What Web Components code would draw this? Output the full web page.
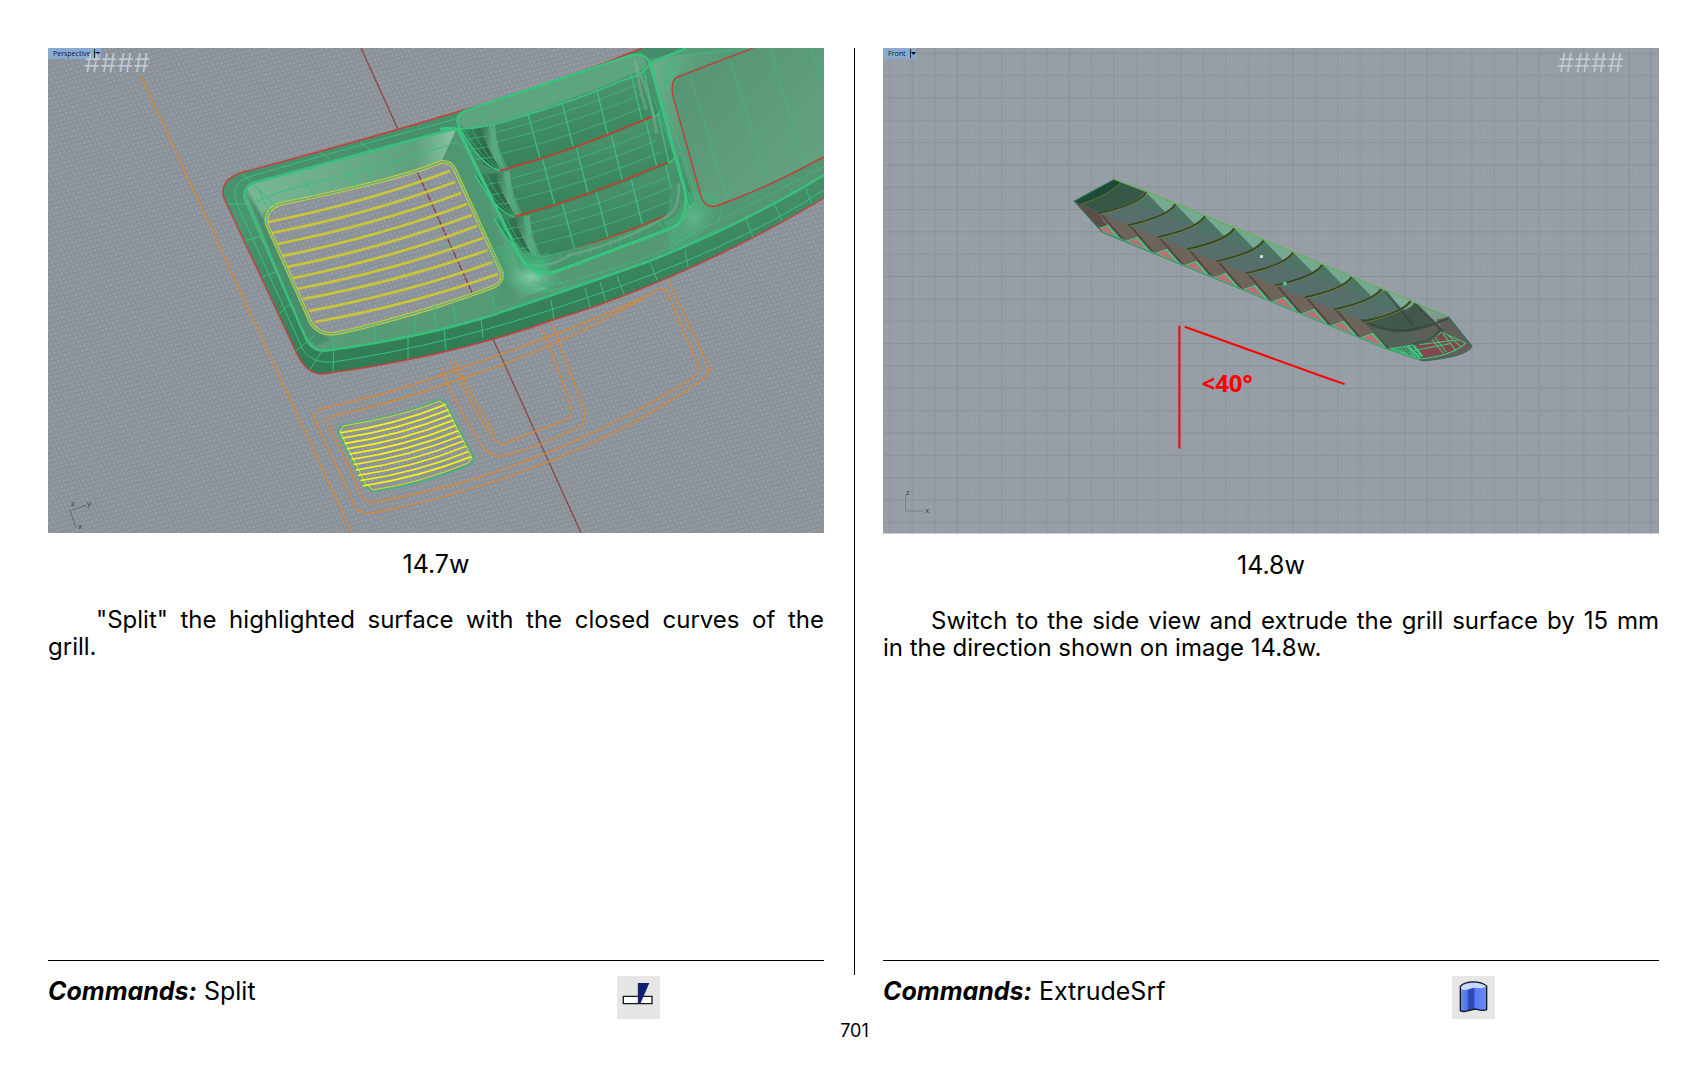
<!DOCTYPE html>
<html lang="en">
<head>
<meta charset="utf-8">
<title>Page 701</title>
<style>
html,body{margin:0;background:#fff;color:#000}
body{font-family:Inter,"Open Sans",sans-serif}
</style>
</head>
<body>
<manual-page number="701">
  <manual-step caption="14.7w" command="Split">
    <perspective-view slot="figure"></perspective-view>
    "Split" the highlighted surface with the closed curves of the grill.
    <split-icon slot="icon"></split-icon>
  </manual-step>
  <manual-step caption="14.8w" command="ExtrudeSrf">
    <front-view slot="figure"></front-view>
    Switch to the side view and extrude the grill surface by 15 mm in the direction shown on image 14.8w.
    <extrude-icon slot="icon"></extrude-icon>
  </manual-step>
</manual-page>

<script>
const define = (name, html) => customElements.define(name, class extends HTMLElement {
  constructor() {
    super();
    this.attachShadow({ mode: 'open' });
  }
  connectedCallback() {
    this.shadowRoot.innerHTML = typeof html === 'function' ? html(this) : html;
  }
});

define('manual-page', el => `
<style>
:host{display:flex;flex-direction:column;box-sizing:border-box;min-height:100vh;padding:48px 48px 25px}
main{flex:1;display:flex}
::slotted(manual-step){flex:1 1 0;min-width:0}
.gap{order:1;flex:none;width:1px;margin:0 28px 44px 30px;background:#000}
::slotted(manual-step:last-child){order:2}
footer{text-align:center;font-size:18px;line-height:22px;padding:1px 0 0 2px}
</style>
<main><slot></slot><div class="gap"></div></main>
<footer>${el.getAttribute('number')}</footer>`);

define('manual-step', el => `
<style>
:host{display:flex;flex-direction:column}
h2{margin:18px 0 0;font-size:25px;line-height:27px;font-weight:400;text-align:center}
p{margin:28px 0 0;font-size:24px;line-height:27px;text-align:justify;text-indent:48px}
footer{margin-top:auto;border-top:1px solid #000;padding-top:15px;display:grid;grid-template-columns:73.3% auto;align-items:start;font-size:25px;line-height:30px}
b{font-weight:700;font-style:italic}
</style>
<slot name="figure"></slot>
<h2>${el.getAttribute('caption')}</h2>
<p><slot></slot></p>
<footer><span><b>Commands:</b> ${el.getAttribute('command')}</span><slot name="icon"></slot></footer>`);

const iconStyle = `<style>:host{display:block;width:43px;height:43px}svg{display:block;width:100%;height:100%}</style>`;
define('split-icon', iconStyle + `
<svg viewBox="52 48 129 129"><path fill="#e6e6e6" d="M52 48h129v129H52z"/>
<path d="M71 109h86v22H71z" fill="#fff" stroke="#151818" stroke-width="4"/>
<path d="M116 69h33l-27 62h-6z" fill="#0c2175"/><path d="M116 69v62" stroke="#111c48" stroke-width="3"/></svg>`);
define('extrude-icon', iconStyle + `
<svg viewBox="66 48 129 129"><defs><linearGradient id="b"><stop offset="0" stop-color="#7190f3"/><stop offset=".25" stop-color="#5070e5"/><stop offset=".34" stop-color="#2847b4"/><stop offset=".5" stop-color="#2c4cc0"/><stop offset=".56" stop-color="#5a7bf6"/><stop offset="1" stop-color="#6888ff"/></linearGradient></defs>
<path fill="#e6e6e6" d="M66 48h129v129H66z"/>
<path d="M91 79C108 61 151 62 170 78V149C161 154 151 151 137 147C119 149 105 160 91 152Z" fill="url(#b)" stroke="#171923" stroke-width="4" stroke-linejoin="round"/>
<path d="M93 80C108 64 151 65 168 79C158 88 147 84 137 83C120 83 105 96 93 86Z" fill="#c7d8ff"/></svg>`);

const viewStyle = `<style>:host{display:block}svg{display:block;width:100%;height:auto}
.label{font:7px "Open Sans",sans-serif;fill:#0b1a2c}.axis{font:8px "Open Sans",sans-serif;fill:#3f4449}
.hash{font:300 26px Inter,sans-serif;fill:#c3ced4}</style>`;

/* Parallel bars between two sides of a grill, bowed slightly downwards. */
function slats(left, right, sag) {
  return left.map(([x, y], i) => {
    const [u, v] = right[i];
    return `M${x} ${y}Q${(x + u) / 2 + sag / 2} ${(y + v) / 2 + sag} ${u} ${v}`;
  }).join('');
}
const mix = (a, b, t) => a + (b - a) * t;
function side(a, b, n, from, to) {
  return Array.from({ length: n }, (_, i) => {
    const t = mix(from, to, i / (n - 1));
    return [mix(a[0], b[0], t), mix(a[1], b[1], t)];
  });
}
const upper = slats(
  [[268,222],[272,233],[277,244],[282,256],[287,267],[293,278],[297,289],[303,299],[309,311],[315,322]],
  [[450,171],[455,182],[461,193],[467,204],[472,215],[477,226],[483,238],[488,250],[493,262],[498,274]], 7);
const lower = slats(side([338,428],[364,489],11,.08,.95), side([444,400],[474,463],11,.07,.9), 6);
/* Short radial isocurves that fan round a filleted corner. */
function fan(cx, cy, r1, r2, a1, a2, n) {
  let d = '';
  for (let i = 0; i <= n; i++) {
    const a = mix(a1, a2, i / n) * Math.PI / 180;
    d += `M${(cx + r1 * Math.cos(a)).toFixed(1)} ${(cy + r1 * Math.sin(a)).toFixed(1)}L${(cx + r2 * Math.cos(a)).toFixed(1)} ${(cy + r2 * Math.sin(a)).toFixed(1)}`;
  }
  return d;
}
const louvre = (x, y) => `<g transform="translate(${x} ${y})">
  <path fill="url(#blade)" d="M128 262Q360 200 575 104L618 80L658 214L640 230Q410 330 180 392Q150 340 128 262Z"/>
  <path fill="url(#dark)" d="M62 266L128 262Q145 340 188 392Q160 392 130 372Z"/>
  <path fill="url(#shine)" d="M118 264L165 254Q170 330 205 385L184 392Q150 340 118 264Z"/>
  <g fill="none" stroke="#3ebd7d" stroke-width="2">
    <path d="M75 300Q110 292 142 288M92 330L155 318M108 358L168 350M150 283Q390 220 590 134M158 309Q400 250 603 165M170 345Q420 285 618 198"/>
    <path stroke-width="4" d="M364 180L400 322M262 214L300 357M470 147L503 283M573 104L606 240M150 255Q160 320 192 390M610 84L642 228"/>
    <path d="M70 265Q120 350 176 388M96 265Q130 340 180 388"/>
  </g>
  <path d="M180 392Q400 332 612 239L640 230" fill="none" stroke="#c93a2f" stroke-width="5"/>
  <path d="M640 230Q658 226 660 212M60 265Q125 380 180 392" fill="none" stroke="#39c07a" stroke-width="5"/></g>`;

define('perspective-view', viewStyle + `
<svg viewBox="48 48 776 485" role="img" aria-label="Perspective viewport">
<defs>
<pattern id="grid" width="1" height="1" patternUnits="userSpaceOnUse" patternTransform="matrix(4.3 -1.15 1.95 4.3 48 48)"><path d="M0 0H1V1H0Z" fill="#939aa1"/><path d="M0 0H1V.25H0ZM0 0V1H.25V0Z" fill="#838a91"/></pattern>
<linearGradient id="body" x1="0" y1="0" x2=".25" y2="1"><stop offset="0" stop-color="#43866a"/><stop offset=".5" stop-color="#4b9570"/><stop offset="1" stop-color="#2f7a52"/></linearGradient>
<linearGradient id="inner" x1="0" y1="0" x2="1" y2=".5"><stop offset="0" stop-color="#6fb08d"/><stop offset=".4" stop-color="#5a9d7a"/><stop offset="1" stop-color="#529571"/></linearGradient>
<linearGradient id="top"><stop offset="0" stop-color="#79b896"/><stop offset=".8" stop-color="#5fa17f"/><stop offset="1" stop-color="#8cc5a5"/></linearGradient>
<linearGradient id="wall" x1="0" y1="0" x2="1" y2="-.45"><stop offset=".2" stop-color="#4f9673"/><stop offset=".5" stop-color="#7cb898"/><stop offset=".8" stop-color="#4a9770"/></linearGradient>
<linearGradient id="panel" x1="0" y1="0" x2="1" y2="1"><stop offset="0" stop-color="#559372"/><stop offset="1" stop-color="#65a582"/></linearGradient>
<linearGradient id="blade" x1="0" y1="0" x2=".25" y2="1"><stop offset="0" stop-color="#539b76"/><stop offset=".9" stop-color="#39845c"/></linearGradient>
<linearGradient id="dark"><stop offset="0" stop-color="#3f8a63"/><stop offset=".6" stop-color="#2b6848"/><stop offset="1" stop-color="#2f6e4d"/></linearGradient>
<linearGradient id="shine"><stop offset="0" stop-color="#2f6e4d"/><stop offset=".5" stop-color="#61a681"/><stop offset="1" stop-color="#479068"/></linearGradient>
<radialGradient id="glow"><stop offset="0" stop-color="#9bd4b6"/><stop offset="1" stop-color="#5fa883" stop-opacity="0"/></radialGradient>
<clipPath id="frame"><path d="M48 48H824V533H48Z"/></clipPath>
<path id="hole" d="M280 204Q330 194 377 182Q420 171 441 162Q451 161 455 170L502 273Q503 283 493 287Q440 307 383 322Q350 331 332 334Q318 334 311 323Q290 275 267 225Q264 210 280 204Z"/>
</defs>
<g clip-path="url(#frame)">
<path fill="url(#grid)" d="M48 48H824V533H48Z"/>
<path d="M361 48L581 533" stroke="#8f4644" stroke-width="1.3"/>
<path d="M141 76L352 533" stroke="#dc8630" stroke-width="1.3" fill="none"/>
<path d="M642 48Q545 88 460 111Q340 147 243 172Q218 180 224 198L296 352Q306 374 322 374Q450 357 553 320C650 291 755 240 824 198V48Z" fill="url(#body)"/>
<path d="M824 48V175Q740 226 647 262Q565 291 493 315Q420 338 323 351Q309 349 304 334L244 197Q244 185 256 182Q350 157 457 128L640 62L690 48Z" fill="url(#inner)"/>
<path d="M246 186Q350 156 457 128L455 166L441 162Q360 190 276 204L262 214Z" fill="url(#top)"/>
<path d="M441 162L457 128L520 270Q528 284 548 288L493 309L502 273Z" fill="url(#wall)"/>
<path d="M246 192L267 225L311 323L330 340L316 346L304 334Z" fill="#47906b"/>
<use href="#hole" fill="url(#grid)"/>
<clipPath id="holeclip"><use href="#hole"/></clipPath>
<path d="M361 48L581 533" stroke="#8f3438" stroke-width="1.3" stroke-dasharray="6 1" clip-path="url(#holeclip)"/>
<path d="${upper}" fill="none" stroke="#c9c638" stroke-width="2.7"/>
<use href="#hole" fill="none" stroke="#cfca36" stroke-width="3.6"/>
<use href="#hole" fill="none" stroke="#62af8b" stroke-width="1.6"/>
<g fill="none" stroke="#39bf7b">
<path stroke-width="2.4" d="M824 175Q740 226 647 262Q565 291 493 315Q420 338 323 351Q309 349 304 334L244 197Q244 185 256 182Q350 157 457 128"/>
<path stroke-width="1" d="M642 53Q540 93 445 122Q330 153 245 178Q230 185 237 204L303 350Q312 364 333 362Q450 345 580 300Q730 251 824 190M258 187Q262 200 272 215M235 167L276 206M320 153L330 159M360 142L376 154M425 137L437 148M300 173L315 197M346 163L355 187M363 157L372 182M386 152L393 175M280 192L400 160L450 145M280 192L255 202M226 204H246M243 241L260 237M261 278L277 271M278 315L290 304M295 352L315 335M309 371L326 345M333 373L334 335M408 359V338M446 350L444 329M483 338L481 319M554 320L551 300M590 307L585 288M606 302L600 282M625 297L617 276M657 280L650 262M688 267L685 250M753 237L745 216M782 221L773 201M812 205L806 188M375 343V325M415 333V315M436 326L434 306M456 322L453 301M495 311L491 292"/>
</g>
<path d="M642 48Q545 88 460 111Q340 147 243 172Q218 180 224 198L296 352Q306 374 322 374Q450 357 553 320C650 291 755 240 824 198" fill="none" stroke="#c83f3a" stroke-width="1.4"/>
</g>
<g clip-path="url(#frame)"><g transform="translate(440 40) scale(.33333)">
  <path fill="url(#blade)" d="M45 235Q50 210 90 205L580 43Q620 42 630 70L738 480Q740 550 680 570L360 685Q270 715 225 620Z"/>
  <path fill="#5ea480" d="M50 236Q60 215 90 205L580 43Q620 45 618 80Q570 110 420 165Q230 240 100 265Q55 265 50 236Z"/>
  <path fill="url(#inner)" d="M630 68L690 48L940 24L720 100Q690 120 700 155L785 475Q800 515 850 495L840 560L660 630L738 500Z"/>
  <path fill="url(#panel)" d="M940 24H1152V350Q1000 435 830 498Q795 505 785 475L700 165Q690 120 720 110Z"/>
  ${louvre(104, 272)}${louvre(44, 138)}${louvre(0, 0)}
  <path fill="#4b956e" d="M225 610Q265 650 310 650Q500 610 665 540Q700 520 692 440L720 430L738 490Q735 550 680 570L360 685Q275 705 225 630Z"/>
  <path fill="none" stroke="#8fb8a0" stroke-width="8" opacity=".4" d="M270 675Q330 685 390 645Q540 610 680 530Q720 510 716 430M590 80Q630 160 650 280M585 60Q600 160 620 210"/>
  <ellipse cx="275" cy="710" rx="85" ry="50" fill="url(#glow)"/>
  <ellipse cx="760" cy="530" rx="60" ry="70" fill="url(#glow)" opacity=".4"/>
  <g fill="none" stroke="#3ebf7e" stroke-width="2">
    <path d="${fan(300,590,70,170,75,165,26)}${fan(650,450,95,190,5,75,24)}${fan(300,620,25,70,40,150,12)}${fan(590,80,80,130,-8,35,12)}"/>
    <path d="M360 640V665M390 633V658M420 625V650M450 618V643M480 610V635M510 600V625M540 588V613M570 576V601M600 562V587M630 550V575M650 540L670 570"/>
    <path d="M185 535Q240 650 310 650Q510 605 660 540Q700 520 692 470M150 460L225 620M640 170L740 450Q800 560 690 605M670 180L765 450Q830 540 690 630M0 620Q100 590 140 540M30 310Q60 300 90 340M340 700L375 745M200 730Q270 770 370 745M250 745Q430 730 700 620M90 205L125 265M110 200L140 260M330 140L345 182M540 65L560 110M560 55L580 105"/>
    <path d="M750 105L865 490M870 60L980 420M990 24L1095 380M1115 24L1152 130M710 30L735 100M820 24L830 55M690 50L940 24M850 495L830 560M930 450L970 500M1020 420L1060 455M700 610L1152 380M360 745Q600 690 850 560"/>
  </g>
  <g fill="none" stroke="#39c47d" stroke-linejoin="round">
    <path stroke-width="9" d="M630 70L735 455Q750 550 680 570L360 690Q270 725 225 620L55 270M0 268Q30 260 55 270"/>
    <path stroke-width="7" d="M60 265Q35 225 90 207L570 47Q615 35 630 70L740 24"/>
    <path stroke-width="5" d="M50 265Q110 270 200 243Q400 185 550 120Q610 105 626 75"/>
  </g>
  <path fill="none" stroke="#c73b32" stroke-width="4" d="M940 24L720 108Q690 115 698 165L785 475Q800 506 830 498Q990 440 1152 350"/>
</g>
<g transform="translate(200 280) scale(.33333)" fill="none" stroke="#dc8630" stroke-width="3.600">
  <path d="M1405 0L1525 260Q1532 285 1505 300Q1240 490 850 615Q680 670 510 700Q480 700 465 680L345 420Q335 395 365 386Q580 340 780 266Q1080 165 1330 53"/>
  <path d="M1400 34L1495 260Q1497 280 1475 295Q1200 475 830 595Q660 645 515 667Q497 665 488 652L380 420Q382 410 395 409Q600 365 800 290Q1090 200 1375 28Q1390 20 1400 34"/>
  <path d="M720 263Q780 400 855 510Q875 532 905 529Q1020 500 1130 445Q1158 430 1154 395L1058 135M752 245Q810 380 880 475Q890 495 915 490L1100 418Q1115 412 1115 395Q1090 300 1025 145M766 242Q820 360 885 462"/>
</g>
<path d="M343 425Q400 417 438 400Q444 399 447 405L473 457Q475 462 469 465Q420 485 375 491Q368 491 365 485L338 432Q338 426 343 425Z" fill="none" stroke="#4bae86" stroke-width="2"/>
<path d="M343 426Q400 417 440 401L446 407L472 458L468 463Q420 483 373 490L365 483L340 432Z" fill="none" stroke="#dedb22" stroke-width="1"/>
<path d="${lower}" fill="none" stroke="#f2ef19" stroke-width="1.8"/>
<path d="M48 48H101V59H48Z" fill="#8aabd0"/><text class="label" x="53" y="56">Perspective</text><path d="M94.500 49V58" stroke="#222"/><path d="M95 52H100L97.500 55Z"/>
<text class="hash" x="84" y="72">####</text>
<path d="M76 528L70 511L86 505" fill="none" stroke="#686e74"/><text class="axis" x="71" y="506">z</text><text class="axis" x="87" y="506">y</text><text class="axis" x="78" y="529">x</text>
</g></svg>`);

/* The ten blades of the extruded grill repeat at an even step along its length. */
const along = shape => Array.from({ length: 10 }, (_, i) =>
  `<g transform="translate(${(i * 88.2).toFixed(1)} ${(i * 36).toFixed(1)})">${shape}</g>`).join('');
const faces = along(`<path fill="#576f6c" d="M122 130Q190 112 250 77L330 118Q290 158 210 166Z"/>`);
const shades = along(`<path fill="#4d7464" d="M260 64L318 126Q270 128 228 98Z"/>`);
const lights = along(`<path fill="#76a992" d="M258 64L348 101Q338 120 318 126Z"/>`);
const rims = along(`<path fill="none" stroke="#7c7a32" stroke-width="8" d="M120 130Q240 102 260 66"/><path fill="none" stroke="#2b4830" stroke-width="5" d="M118 129Q240 102 260 66"/>`);
const walls = along(`<path fill="#6f645c" d="M118 130L210 166L275 246L190 212L140 165Z"/><path fill="#554842" d="M120 130L132 135L200 214L190 211Z"/>`);
const teeth = along(`<path fill="#b96f76" stroke="#3ecb83" stroke-width="3" d="M110 178L146 165L184 209Z"/><path stroke="#34d58a" stroke-width="5" stroke-dasharray="4 2" d="M145 167L181 207"/>`);
define('front-view', viewStyle + `
<svg viewBox="884 48 775 485" role="img" aria-label="Front viewport">
<defs>
<clipPath id="hull"><path d="M45 93L165 28L260 64L1165 438L1237 528Q1220 560 1090 574L980 537L130 188Z"/></clipPath>
<pattern id="fine" width="2.233" height="2.233" patternUnits="userSpaceOnUse" x="891" y="53"><path d="M0 0H3V3H0Z" fill="#99a1a9"/><path d="M0 0H3M0 0V3" stroke="#939aa2" stroke-width="1"/></pattern>
<pattern id="major" width="22.36" height="22.31" patternUnits="userSpaceOnUse" x="890.300" y="52.600"><path d="M.6 0V23M0 .6H23" stroke="#8b929a" stroke-width="1"/></pattern>
<linearGradient id="tip"><stop offset="0" stop-color="#476457"/><stop offset="1" stop-color="#675b54"/></linearGradient>
</defs>
<path fill="url(#fine)" d="M884 48H1659V533H884Z"/><path fill="url(#major)" d="M884 48H1659V533H884Z"/>
<g transform="translate(1060 170) scale(.33333)">
  <g clip-path="url(#hull)">
  <path fill="#587469" d="M45 93L165 28L260 66L1165 440L1237 528Q1220 560 1090 572L980 535L130 186Z"/>
  <path fill="#5d4d47" d="M50 96L122 130L215 165L190 212L120 180Z"/>
  ${faces}${shades}${lights}${walls}
  <path fill="#385847" d="M45 93L165 28L185 36L260 66Q230 108 122 128Z"/>
  <path fill="#1d4a37" d="M45 93L165 28L185 38Q145 80 65 102Z"/>
  <path fill="none" stroke="#89832f" stroke-width="2" d="M65 102Q150 75 185 36"/>
  <path fill="url(#tip)" opacity=".9" d="M905 448Q1040 430 1065 398L1165 440L1237 528Q1225 555 1090 572L985 530Z"/>
  <path fill="#83ac99" opacity=".8" d="M975 360L1065 398L1045 425L1000 390ZM1065 398L1165 440L1130 448L1145 470Z"/>
  <path fill="#3d5749" opacity=".85" d="M905 448Q1040 430 1065 398L1118 460Q1070 490 1000 486Z"/>
  <path fill="#80484d" d="M1060 524Q1115 506 1145 485L1218 518Q1190 548 1085 563Z"/>
  <g fill="none" stroke="#3acb81" stroke-width="3"><path d="M990 534Q1100 525 1145 485L1218 518Q1180 555 1080 566ZM1062 540L1170 520M1080 522L1200 508M1115 505L1150 548M1125 500L1160 545M1150 490L1188 540M1165 495L1205 530M1000 534L1035 552M1010 532L1045 556M1020 530L1055 560M1030 528L1065 562M1040 527L1072 564"/><path stroke-width="7" d="M1045 526L1080 562M1060 524L1088 558"/></g>
  <path fill="none" stroke="#35453d" stroke-width="7" opacity=".7" d="M905 448Q1000 505 1120 462L1165 445M1065 398L1140 475Q1130 510 1060 522M975 360L1060 465M1070 402L1150 485"/>
  ${teeth}${rims}
  </g>
  <path fill="none" stroke="#59b947" stroke-width="3" d="M165 28L260 63L1165 438"/>
  <path fill="none" stroke="#2f6b52" stroke-width="3" d="M1165 438L1237 528Q1220 560 1090 572L980 535L130 186L45 93L165 28"/>
  <path fill="none" stroke="#45b77b" stroke-width="3" d="M130 184L980 535L1080 568"/>
  <path d="M602 255H610V263H602Z" fill="#e5ffe9"/><path d="M671 335H681V345H671Z" fill="#54c99a"/>
  <path fill="none" stroke="#f00" stroke-width="6" d="M360 466V834M376 469L800 622L855 641"/>
</g>
<text x="1202" y="392" style="font:700 24px 'Open Sans',sans-serif;fill:#f00">&lt;40°</text>
<path d="M884 48H917V59H884Z" fill="#8aabd0"/><text class="label" x="889" y="56">Front</text><path d="M911.500 49V58" stroke="#222"/><path d="M912 52H917L914.500 55Z"/>
<text class="hash" x="1558" y="72">####</text>
<path d="M906.500 494V510.500H924" fill="none" stroke="#7d848b"/><text class="axis" x="907" y="494">z</text><text class="axis" x="926" y="512">x</text>
</svg>`);
</script>
</body>
</html>
